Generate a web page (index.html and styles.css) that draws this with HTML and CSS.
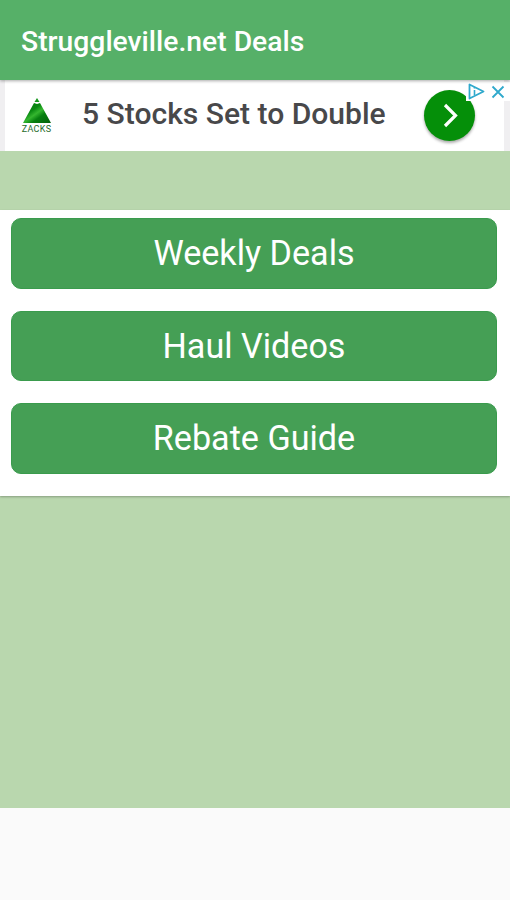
FILE: index.html
```html
<!DOCTYPE html>
<html lang="en">
<head>
<meta charset="utf-8">
<title>Struggleville.net Deals</title>
<link rel="stylesheet" href="styles.css">
</head>
<body>
<header class="bar"><h1>Struggleville.net Deals</h1></header>
<section class="ad">
  <div class="ad-card">
    <div class="logo">
      <svg width="28" height="25" viewBox="0 0 28 25">
        <defs><linearGradient id="leaf" x1="0" y1="0" x2="1" y2="1"><stop offset="0" stop-color="#05750c"/><stop offset=".35" stop-color="#0a8a12"/><stop offset=".5" stop-color="#35b62f"/><stop offset=".65" stop-color="#078010"/><stop offset="1" stop-color="#04610a"/></linearGradient></defs>
        <path d="M14 0l2.500 4h-5z" fill="#14961a"/><path d="M11 5l3 1 3-1L28 25H0z" fill="url(#leaf)"/>
      </svg>
      <span>ZACKS</span>
    </div>
    <p class="headline">5 Stocks Set to Double</p>
    <div class="go"><svg width="51" height="51" viewBox="0 0 51 51"><path d="M21 15l10.500 10.500L21 36" fill="none" stroke="#fff" stroke-width="3.200"/></svg></div>
  </div>
  <div class="choices">
    <svg width="44" height="19" viewBox="0 0 44 19"><path d="M3.500 2.500v14l14-7z" fill="none" stroke="#2fa9cc" stroke-width="1.800" stroke-linejoin="round"/><path d="M8.500 8v5M8.500 5v1.500" stroke="#2fa9cc" stroke-width="1.600"/><path d="M26.500 4.500l11 11M37.500 4.500l-11 11" stroke="#2fa9cc" stroke-width="1.800"/></svg>
  </div>
</section>
<nav class="menu">
  <a class="button">Weekly Deals</a>
  <a class="button">Haul Videos</a>
  <a class="button">Rebate Guide</a>
</nav>
<main class="fill"></main>
<footer class="foot"></footer>
</body>
</html>
```
FILE: styles.css
```css
* { box-sizing: border-box; }
body { margin: 0; width: 510px; height: 900px; display: flex; flex-direction: column; background: #b9d7ae; font-family: Roboto, sans-serif; overflow: hidden; }
.bar { height: 80px; background: #56b068; display: flex; align-items: center; padding: 2px 21px 0; position: relative; z-index: 1; box-shadow: 0 1px 3px #0005; }
h1 { margin: 0; color: #fff; font-size: 28.300px; font-weight: 500; white-space: nowrap; }
.ad { position: relative; height: 71px; margin-bottom: 59px; background: #f0eff1; padding: 0 6px 0 5px; }
.ad-card { height: 71px; background: #fff; display: flex; align-items: center; }
.logo { width: 63px; padding-top: 2px; display: flex; flex-direction: column; align-items: center; flex: none; }
.logo span { font-size: 9px; line-height: 12px; color: #286c2c; letter-spacing: 0.300px; }
.headline { margin: 0; padding-left: 14px; width: 355px; flex: none; font-size: 30.050px; font-weight: 500; color: #48484a; white-space: nowrap; line-height: 68px; height: 71px; }
.go { width: 51px; height: 51px; flex: none; border-radius: 50%; background: #058f09; box-shadow: 0 2px 3px #0005; margin-left: 1px; }
.choices { position: absolute; right: 0; top: 2px; width: 44px; height: 19px; background: #fff; }
.choices svg { display: block; }
.menu { height: 286px; background: #fff; padding: 8px 13px 0 11px; display: flex; flex-direction: column; gap: 22px; box-shadow: 0 1px 2px #0004; }
.button { height: 70.500px; border-radius: 10px; background: #459f55; border: 1px solid #3a9b4d; color: #fff; font-size: 34.150px; display: flex; align-items: center; justify-content: center; }
.fill { flex: 1; }
.foot { height: 92px; background: #fafafa; }
```
